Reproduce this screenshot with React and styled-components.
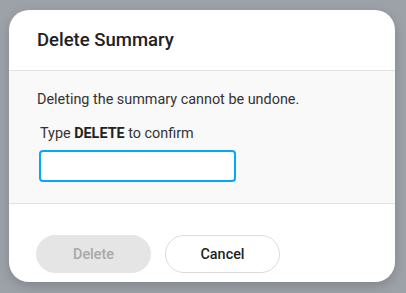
import React from "react";
import styled, { createGlobalStyle } from "styled-components";

const Global = createGlobalStyle`
  html, body { margin: 0; padding: 0; }
  body {
    background: #9da2a9;
    font-family: Roboto, "Liberation Sans", sans-serif;
    width: 406px;
    height: 293px;
    overflow: hidden;
  }
`;

const Backdrop = styled.div`
  padding: 10px 0 0 9px;
`;

const Modal = styled.div`
  width: 386px;
  height: 272px;
  background: #fff;
  border-radius: 20px;
  overflow: hidden;
  display: flex;
  flex-direction: column;
  box-shadow: 0 4px 12px rgba(0, 0, 0, 0.18);
`;

const Header = styled.div`
  height: 60px;
  flex: none;
  display: flex;
  align-items: center;
  padding-left: 28px;
  border-bottom: 1px solid #e2e2e2;
`;

const Title = styled.h2`
  margin: 0;
  font-size: 18.5px;
  font-weight: 500;
  color: #202124;
`;

const Body = styled.div`
  background: #f9f9f9;
  padding: 19px 28px 21px 28px;
  border-bottom: 1px solid #e2e2e2;
  display: flex;
  flex-direction: column;
  align-items: flex-start;
`;

const Text = styled.p`
  margin: 0;
  font-size: 14.4px;
  line-height: 20px;
  color: #333;
`;

const Label = styled.label`
  margin: 14px 0 6px 3px;
  font-size: 14.4px;
  line-height: 20px;
  color: #333;
  b { font-weight: 700; color: #222; }
`;

const Input = styled.input`
  box-sizing: border-box;
  width: 197px;
  height: 32px;
  margin-left: 2px;
  border: 2px solid #03a9f4;
  border-radius: 4px;
  background: #fff;
  outline: none;
  font-family: inherit;
  font-size: 14px;
  padding: 0 8px;
`;

const Footer = styled.div`
  flex: 1;
  display: flex;
  gap: 14px;
  padding: 31px 0 0 27px;
`;

const Button = styled.button`
  box-sizing: border-box;
  width: 115px;
  height: 38px;
  border-radius: 19px;
  font-family: inherit;
  font-size: 14.4px;
  font-weight: 500;
  cursor: pointer;
  background: ${(p) => (p.$variant === "disabled" ? "#e5e5e5" : "#fff")};
  color: ${(p) => (p.$variant === "disabled" ? "#a8a8a8" : "#1f1f1f")};
  border: 1px solid ${(p) => (p.$variant === "disabled" ? "#e5e5e5" : "#dcdcdc")};
`;

export default function App() {
  return (
    <>
      <Global />
      <Backdrop>
        <Modal>
          <Header>
            <Title>Delete Summary</Title>
          </Header>
          <Body>
            <Text>Deleting the summary cannot be undone.</Text>
            <Label>
              Type <b>DELETE</b> to confirm
            </Label>
            <Input />
          </Body>
          <Footer>
            <Button $variant="disabled" disabled>Delete</Button>
            <Button>Cancel</Button>
          </Footer>
        </Modal>
      </Backdrop>
    </>
  );
}
